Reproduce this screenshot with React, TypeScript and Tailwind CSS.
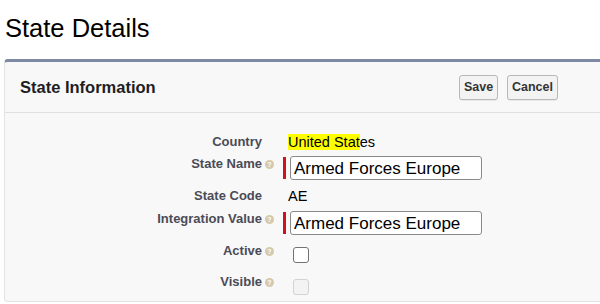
import React from "react";

const Help = () => (
  <span className="ml-[3px] inline-flex h-[9px] w-[9px] items-center justify-center rounded-full bg-[#d6c9ab] text-[7px] font-bold leading-none text-white">?</span>
);

function Row({ label, help, children, cls }: { label: string; help?: boolean; children: React.ReactNode; cls: string }) {
  return (
    <div className={`flex items-start ${cls}`}>
      <div className="w-[257px] text-right text-[13px] font-bold leading-[16px] text-[#4b4b57]">{label}</div>
      <div className="flex h-[16px] w-[21px] items-center">{help && <Help />}</div>
      <div className="flex items-start">{children}</div>
    </div>
  );
}

const Input = ({ value }: { value: string }) => (
  <div className="flex items-start">
    <div className="mt-[1px] h-[22px] w-[3px] bg-[#d0101e]"></div>
    <div className="ml-[4px] flex h-[24px] w-[192px] items-center rounded-[3px] border border-[#8a8a8a] bg-white pl-[3px] text-[17px] leading-none text-black">{value}</div>
  </div>
);

export default function App() {
  return (
    <div className="h-[304px] w-[600px] overflow-hidden bg-white" style={{ fontFamily: '"Liberation Sans", Arial, sans-serif' }}>
      <div className="h-[43px] pl-[5px] pt-[13px] text-[25.5px] leading-[30px] text-black">State Details</div>
      <div className="ml-[4px] mt-[16px] h-[243px] w-[600px] rounded-[4px] border border-[#e3e3e3] border-t-[3px] border-t-[#7d89a3] bg-[#f8f8f8]">
        <div className="flex h-[51px] items-center justify-between border-b border-[#e0e0e0] pl-[15px] pr-[45px]">
          <div className="text-[16.5px] font-bold text-[#1e1e1e]">State Information</div>
          <div className="flex gap-[9px]">
            <button className="h-[25px] w-[39px] rounded-[3px] border border-[#b8b8b8] bg-[#f3f3f3] text-[12.5px] font-bold text-[#333] shadow-[0_1px_0_rgba(0,0,0,0.06)]">Save</button>
            <button className="h-[25px] w-[51px] rounded-[3px] border border-[#b8b8b8] bg-[#f3f3f3] text-[12.5px] font-bold text-[#333] shadow-[0_1px_0_rgba(0,0,0,0.06)]">Cancel</button>
          </div>
        </div>
        <div>
          <Row label="Country" cls="mt-[21px]">
            <span className="pl-[5px] text-[14.5px] leading-[16px] text-black"><span className="bg-[#ffff00]">United Stat</span>es</span>
          </Row>
          <Row label="State Name" help cls="mt-[6px]">
            <Input value="Armed Forces Europe" />
          </Row>
          <Row label="State Code" cls="mt-[8px]">
            <span className="pl-[5px] text-[14.5px] leading-[16px] text-black">AE</span>
          </Row>
          <Row label="Integration Value" help cls="mt-[7px]">
            <Input value="Armed Forces Europe" />
          </Row>
          <Row label="Active" help cls="mt-[8px]">
            <div className="ml-[10px] mt-[4px] h-[16px] w-[16px] rounded-[3px] border border-[#737373] bg-white"></div>
          </Row>
          <Row label="Visible" help cls="mt-[11px]">
            <div className="ml-[10px] mt-[5px] h-[16px] w-[16px] rounded-[3px] border border-[#d2d2d2] bg-[#f3f3f3]"></div>
          </Row>
        </div>
      </div>
    </div>
  );
}
